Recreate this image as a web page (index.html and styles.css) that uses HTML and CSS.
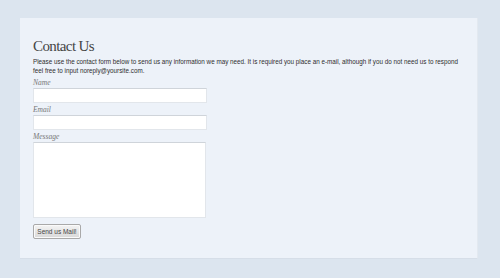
FILE: index.html
```html
<!DOCTYPE html>
<html lang="en">
<head>
    <meta charset="UTF-8">
    <title>Contact Us</title>
    <link rel="stylesheet" href="styles.css">
</head>
<body>
    <div class="panel">
        <h1>Contact Us</h1>
        <p class="intro">Please use the contact form below to send us any information we may need. It is required you place an e-mail, although if you do not need us to respond feel free to input noreply@yoursite.com.</p>
        <form class="contact-form">
            <label for="name">Name</label>
            <input type="text" id="name" class="field">
            <label for="email">Email</label>
            <input type="text" id="email" class="field">
            <label for="message">Message</label>
            <textarea id="message" class="field message"></textarea>
            <button type="button" class="send">Send us Mail!</button>
        </form>
    </div>
</body>
</html>
```

FILE: styles.css
```css
* {
    margin: 0;
    padding: 0;
    box-sizing: border-box;
}

body {
    background: #dce5ef;
    font-family: 'Liberation Sans', Arial, sans-serif;
    padding: 18px 22px 19px 20px;
}

.panel {
    height: 241px;
    background: #edf2f9;
    border-right: 1px solid #e3e9f0;
    border-bottom: 1px solid #d6dee8;
    padding: 20px 13px 0;
}

h1 {
    font-family: 'Liberation Serif', 'Times New Roman', serif;
    font-weight: normal;
    font-size: 15px;
    letter-spacing: -0.6px;
    line-height: 16px;
    color: #444;
    margin-bottom: 4px;
}

.intro {
    font-size: 6.3px;
    line-height: 8.5px;
    color: #2e2e2e;
    width: 430px;
    margin-bottom: 4px;
}

.contact-form {
    display: flex;
    flex-direction: column;
    align-items: flex-start;
}

label {
    font-family: 'Liberation Serif', 'Times New Roman', serif;
    font-style: italic;
    font-size: 7.5px;
    line-height: 8px;
    color: #777;
    margin-bottom: 1px;
}

.field {
    width: 174px;
    height: 15px;
    background: #fff;
    border: 1px solid #e2e6eb;
    border-top-color: #cfd4da;
    margin-bottom: 3px;
    outline: none;
}

.message {
    width: 173px;
    height: 76px;
    resize: none;
    margin-bottom: 6px;
}

.send {
    width: 48px;
    height: 15px;
    font-family: 'Liberation Sans', Arial, sans-serif;
    font-size: 6.5px;
    color: #444;
    background: linear-gradient(#f4f4f4, #d8d8d8);
    border: 1px solid #a9a9a9;
    border-radius: 2px;
    box-shadow: inset 0 0 0 1px #fafafa;
}
```
